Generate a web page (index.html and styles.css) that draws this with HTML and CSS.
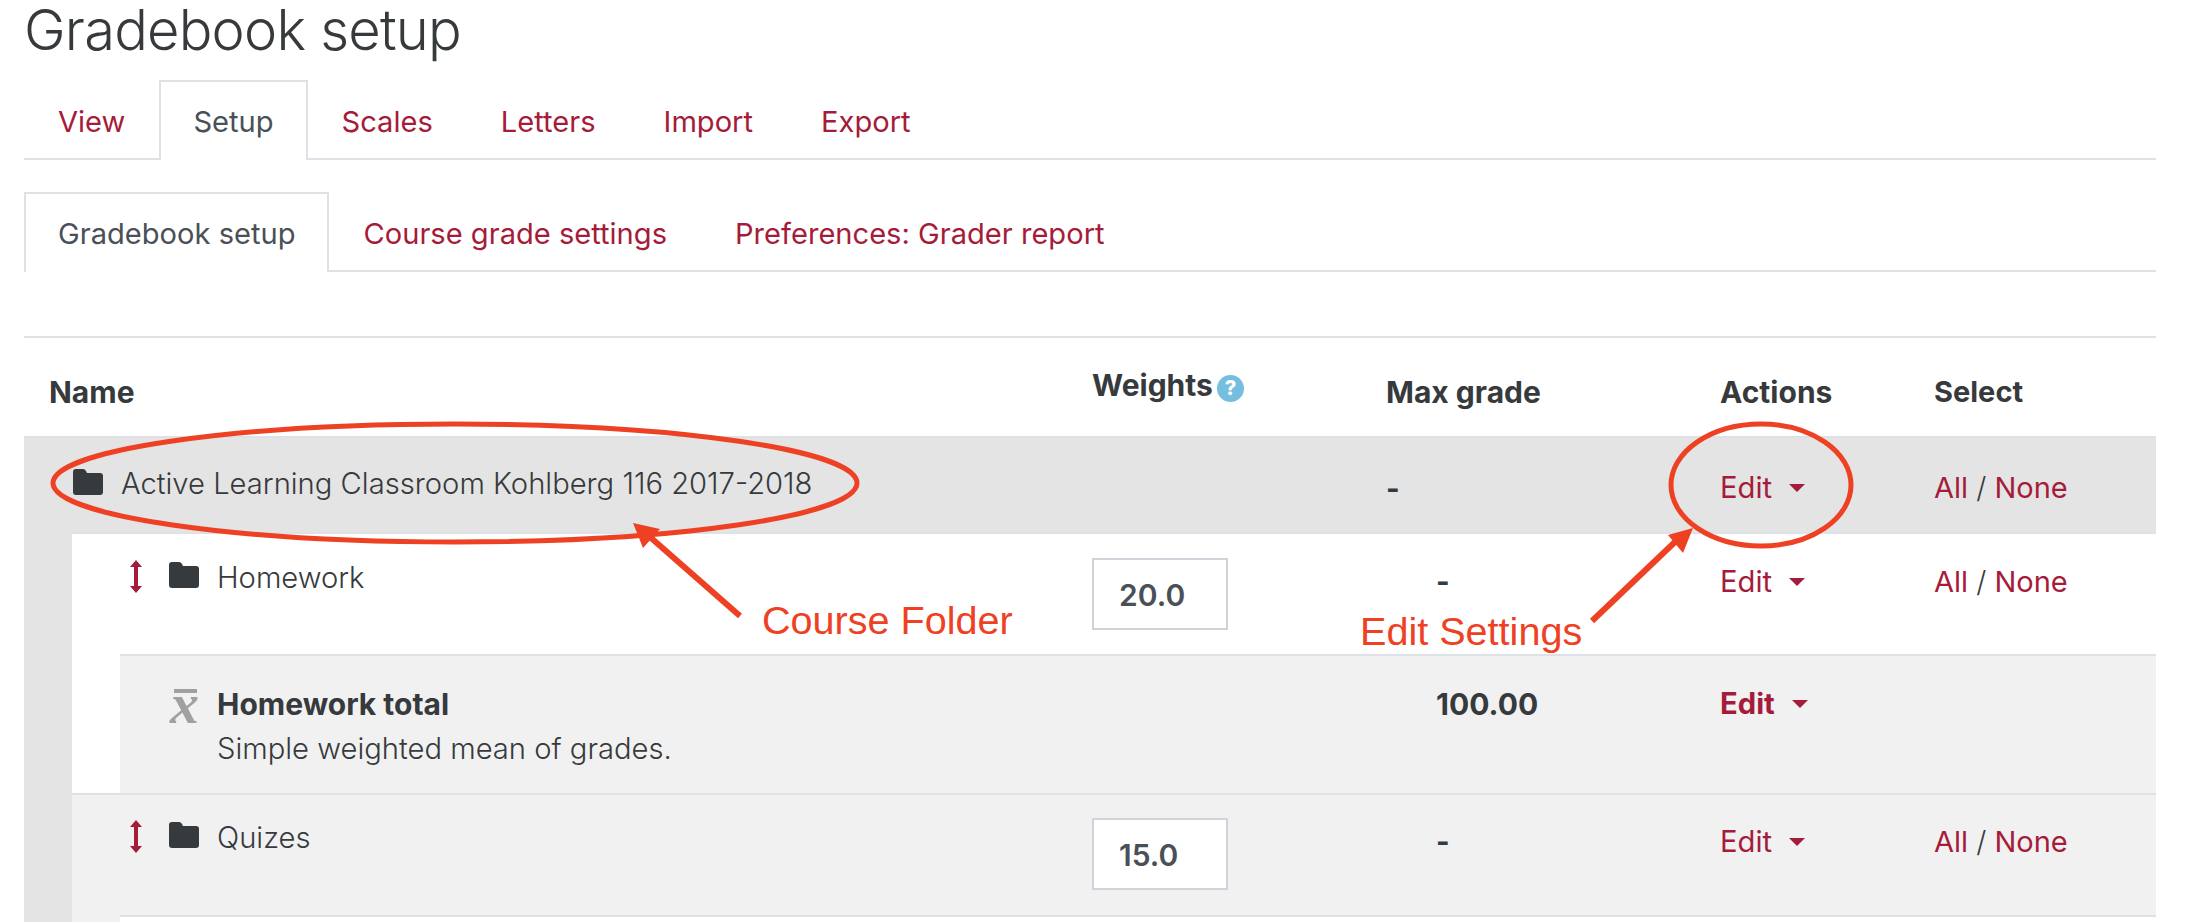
FILE: index.html
```html
<!DOCTYPE html>
<html lang="en">
<head>
    <meta charset="UTF-8">
    <title>Gradebook setup</title>
    <link rel="stylesheet" href="styles.css">
</head>
<body>

<svg width="0" height="0" class="defs">
    <symbol id="folder" viewBox="0 0 30 26">
        <path d="M3 0h7q2 0 3 2l1 2h13q3 0 3 3v16q0 3-3 3H3q-3 0-3-3V3q0-3 3-3z"/>
    </symbol>
    <symbol id="move" viewBox="0 0 12 33">
        <path d="M6 0l6 7H8v19h4l-6 7-6-7h4V7H0z"/>
    </symbol>
</svg>

<h1 class="page-title">Gradebook setup</h1>

<ul class="tabs">
    <li><a href="#">View</a></li>
    <li class="active"><a href="#">Setup</a></li>
    <li><a href="#">Scales</a></li>
    <li><a href="#">Letters</a></li>
    <li><a href="#">Import</a></li>
    <li><a href="#">Export</a></li>
</ul>

<ul class="tabs subtabs">
    <li class="active"><a href="#">Gradebook setup</a></li>
    <li><a href="#">Course grade settings</a></li>
    <li><a href="#">Preferences: Grader report</a></li>
</ul>

<div class="setup-table">
    <div class="row head">
        <div class="name">Name</div>
        <div class="weight weight-head">Weights <span class="help">?</span></div>
        <div class="grade">Max grade</div>
        <div class="actions">Actions</div>
        <div class="select">Select</div>
    </div>

    <div class="row course">
        <div class="name">
            <svg class="folder"><use href="#folder"/></svg>
            <span>Active Learning Classroom Kohlberg 116 2017-2018</span>
        </div>
        <div class="weight"></div>
        <div class="grade">-</div>
        <div class="actions"><a href="#" class="edit">Edit</a></div>
        <div class="select"><a href="#">All</a> / <a href="#">None</a></div>
    </div>

    <div class="children">
        <div class="row category">
            <div class="name">
                <svg class="move"><use href="#move"/></svg>
                <svg class="folder"><use href="#folder"/></svg>
                <span>Homework</span>
            </div>
            <div class="weight"><input class="weight-input" value="20.0"></div>
            <div class="grade sub">-</div>
            <div class="actions"><a href="#" class="edit">Edit</a></div>
            <div class="select"><a href="#">All</a> / <a href="#">None</a></div>
        </div>

        <div class="indent">
            <div class="row total">
                <div class="name">
                    <span class="xbar"><i class="xbar-line"></i><i class="xbar-x">x</i></span>
                    <div>
                        <strong>Homework total</strong>
                        <p>Simple weighted mean of grades.</p>
                    </div>
                </div>
                <div class="weight"></div>
                <div class="grade sub"><strong>100.00</strong></div>
                <div class="actions"><a href="#" class="edit bold">Edit</a></div>
                <div class="select"></div>
            </div>
        </div>

        <div class="shaded">
            <div class="row category">
                <div class="name">
                    <svg class="move"><use href="#move"/></svg>
                    <svg class="folder"><use href="#folder"/></svg>
                    <span>Quizes</span>
                </div>
                <div class="weight"><input class="weight-input" value="15.0"></div>
                <div class="grade sub">-</div>
                <div class="actions"><a href="#" class="edit">Edit</a></div>
                <div class="select"><a href="#">All</a> / <a href="#">None</a></div>
            </div>
            <div class="indent">
                <div class="row next"></div>
            </div>
        </div>
    </div>
</div>

<!-- callouts drawn on top of the screenshot -->
<svg class="callouts" width="2194" height="922" viewBox="0 0 2194 922">
    <ellipse cx="455" cy="483" rx="402" ry="59" fill="none" stroke="#ee4124" stroke-width="5"/>
    <ellipse cx="1761" cy="485" rx="90" ry="61" fill="none" stroke="#ee4124" stroke-width="5"/>
    <path d="M740 616L650 537" stroke="#ee4124" stroke-width="6"/>
    <path d="M633 523l27 6-17 19z" fill="#ee4124"/>
    <path d="M1592 621l84-80" stroke="#ee4124" stroke-width="6"/>
    <path d="M1693 528l-25 7 15 18z" fill="#ee4124"/>
</svg>
<span class="callout-text course-folder">Course Folder</span>
<span class="callout-text edit-settings">Edit Settings</span>

</body>
</html>
```

FILE: styles.css
```css
body {
    font-family: "Inter", "Liberation Sans", sans-serif;
    font-size: 29.2px;
    font-weight: 300;
    line-height: 40px;
    color: #373a3c;
    background-color: #fff;
    margin: 0;
    padding: 0 38px 0 24px;
    height: 922px;
    overflow: hidden;
    position: relative;
    box-sizing: border-box;
}

a {
    color: #a51c3a;
    font-weight: 400;
    text-decoration: none;
}

.defs {
    position: absolute;
}

.page-title {
    font-size: 56px;
    font-weight: 300;
    letter-spacing: -0.8px;
    line-height: 60px;
    height: 80px;
    margin: 0;
}

/* Tabs */
.tabs {
    display: flex;
    list-style: none;
    margin: 0 0 32px;
    padding: 0;
    border-bottom: 2px solid #dee2e6;
    font-size: 29.1px;
}

.tabs li {
    border: 2px solid transparent;
    border-bottom: none;
    margin-bottom: -2px;
    padding: 20px 32px 18px;
    height: 80px;
    box-sizing: border-box;
}

.tabs li.active {
    border-color: #dee2e6;
    background-color: #fff;
}

.tabs li.active a {
    color: #495057;
}

.subtabs {
    margin-bottom: 64px;
}

/* Table */
.setup-table {
    border-top: 2px solid #dee2e6;
}

.row {
    display: flex;
    border-top: 2px solid #dee2e6;
}

.name {
    flex: 1;
    display: flex;
    align-items: flex-start;
    min-width: 0;
}

.weight {
    width: 294px;
    flex: none;
}

.grade {
    width: 334px;
    flex: none;
}

.actions {
    width: 214px;
    flex: none;
}

.select {
    width: 222px;
    flex: none;
    font-size: 29px;
}

.head {
    border-top: none;
    height: 98px;
    padding-top: 34px;
    box-sizing: border-box;
    font-size: 30px;
    font-weight: 700;
}

.head .name {
    padding-left: 25px;
}

.weight-head {
    margin-top: -7px;
    padding-left: 0;
    box-sizing: border-box;
}

.help {
    display: inline-block;
    width: 27px;
    height: 27px;
    line-height: 27px;
    margin-left: -3px;
    border-radius: 50%;
    background-color: #74bfdf;
    color: #fff;
    font-size: 20px;
    font-weight: 800;
    text-align: center;
    vertical-align: 1px;
}

.course {
    background-color: #e4e4e4;
    height: 96px;
    box-sizing: border-box;
    padding-top: 30px;
}

.course .name {
    padding-left: 49px;
    margin-top: -4px;
}

.course .folder {
    margin: 5px 18px 0 0;
}

.course .grade {
    font-weight: 700;
    padding-top: 1px;
}

.folder {
    width: 30px;
    height: 26px;
    fill: #373a3c;
    flex: none;
    margin: 4px 18px 0 0;
}

.move {
    width: 12px;
    height: 33px;
    fill: #a51c3a;
    flex: none;
    margin: 2px 27px 0 58px;
}

.children {
    background-color: #e4e4e4;
    padding-left: 48px;
}

.category {
    background-color: #fff;
    height: 122px;
    box-sizing: border-box;
    padding-top: 24px;
}

.category .actions,
.category .select,
.category .grade {
    padding-top: 4px;
}

.category .grade {
    font-weight: 700;
}

.sub {
    padding-left: 50px;
    box-sizing: border-box;
}

.weight-input {
    display: block;
    width: 136px;
    height: 72px;
    box-sizing: border-box;
    border: 2px solid #ced4da;
    padding: 2px 25px 0;
    font-family: inherit;
    font-size: 30px;
    font-weight: 600;
    color: #495057;
    background-color: #fff;
    outline: none;
}

.indent {
    background-color: #fff;
    padding-left: 48px;
}

.total {
    background-color: #f1f1f2;
    height: 139px;
    box-sizing: border-box;
    padding-top: 28px;
}

.total strong {
    font-size: 30px;
    font-weight: 700;
}

.total p {
    margin: 4px 0 0;
}

.xbar {
    width: 47px;
    flex: none;
    display: flex;
    flex-direction: column;
    margin: 5px 0 0 50px;
}

.xbar-line {
    display: block;
    width: 23px;
    height: 4px;
    margin-left: 4px;
    background-color: #a0a0a0;
}

.xbar-x {
    font-family: "Liberation Serif", serif;
    font-size: 58px;
    font-weight: 700;
    line-height: 30px;
    margin-top: -4px;
    color: #a0a0a0;
}

.shaded {
    background-color: #f1f1f2;
}

.shaded .category {
    background-color: #f1f1f2;
    padding-top: 23px;
}

.shaded .indent {
    background-color: #f1f1f2;
}

.next {
    background-color: #fff;
    height: 20px;
}

.edit::after {
    content: "";
    display: inline-block;
    border-top: 8px solid #a51c3a;
    border-left: 8.5px solid transparent;
    border-right: 8.5px solid transparent;
    margin-left: 17px;
    vertical-align: 6px;
}

.edit.bold {
    font-weight: 700;
}

/* Callouts */
.callouts {
    position: absolute;
    left: 0;
    top: 0;
    pointer-events: none;
}

.callout-text {
    position: absolute;
    font-family: "Liberation Sans", Arial, sans-serif;
    font-size: 39.6px;
    font-weight: 400;
    line-height: 44px;
    color: #ee4124;
}

.course-folder {
    left: 762px;
    top: 598px;
}

.edit-settings {
    left: 1360px;
    top: 609px;
}
```
